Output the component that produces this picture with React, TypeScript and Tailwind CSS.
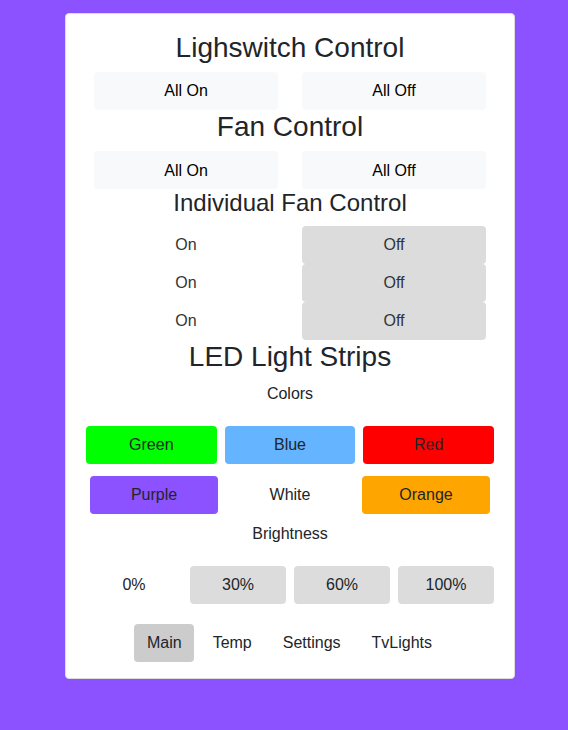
import React from "react";

const font = { fontFamily: '"Liberation Sans", Arial, sans-serif' };

function Btn({ children, className = "" }: { children: React.ReactNode; className?: string }) {
  return (
    <button
      className={`h-[38px] rounded-[4px] text-[16px] leading-[24px] flex items-center justify-center pt-[1px] ${className}`}
    >
      {children}
    </button>
  );
}

export default function App() {
  return (
    <div className="min-h-[730px] w-full bg-[#8c52ff] pt-[13px]" style={font}>
      <div className="ml-[65px] w-[450px] bg-white border border-[#dcdcdc] rounded-[4px] px-[20px] pt-[16px] pb-[16px] text-[#212529] flex flex-col items-stretch">
        <h2 className="text-[28px] leading-[1.2] text-center pt-[1px] mb-[7px]">Lighswitch Control</h2>
        <div className="grid grid-cols-2 gap-x-[24px] px-[8px]">
          <Btn className="bg-[#f8f9fa] text-black">All On</Btn>
          <Btn className="bg-[#f8f9fa] text-black">All Off</Btn>
        </div>
        <h2 className="text-[28px] leading-[1.2] text-center mb-[8px]">Fan Control</h2>
        <div className="grid grid-cols-2 gap-x-[24px] px-[8px]">
          <Btn className="bg-[#f8f9fa] text-black">All On</Btn>
          <Btn className="bg-[#f8f9fa] text-black">All Off</Btn>
        </div>
        <h3 className="text-[24px] leading-[1.2] text-center mb-[8px]">Individual Fan Control</h3>
        <div className="grid grid-cols-2 gap-x-[24px] px-[8px] text-[#333]">
          {[0, 1, 2].map((i) => (
            <React.Fragment key={i}>
              <Btn className="bg-transparent text-[#333]">On</Btn>
              <Btn className="bg-[#dcdcdc] text-[#333]">Off</Btn>
            </React.Fragment>
          ))}
        </div>
        <h2 className="text-[28px] leading-[1.2] text-center mb-[8px]">LED Light Strips</h2>
        <p className="text-[16px] leading-[24px] text-center mb-[20px]">Colors</p>
        <div className="grid grid-cols-3 gap-x-[8px]">
          <Btn className="bg-[#00ff00] text-[#212529]">Green</Btn>
          <Btn className="bg-[#64b4ff] text-[#212529]">Blue</Btn>
          <Btn className="bg-[#ff0000] text-[#212529]">Red</Btn>
        </div>
        <div className="grid grid-cols-3 mt-[12px]">
          <Btn className="bg-[#8c52ff] text-[#212529] mx-[4px]">Purple</Btn>
          <Btn className="bg-transparent text-[#212529] mx-[4px]">White</Btn>
          <Btn className="bg-[#ffa500] text-[#212529] mx-[4px]">Orange</Btn>
        </div>
        <p className="text-[16px] leading-[24px] text-center mt-[8px] mb-[20px]">Brightness</p>
        <div className="grid grid-cols-4 gap-x-[8px]">
          <Btn className="bg-transparent text-[#212529]">0%</Btn>
          <Btn className="bg-[#dcdcdc] text-[#212529]">30%</Btn>
          <Btn className="bg-[#dcdcdc] text-[#212529]">60%</Btn>
          <Btn className="bg-[#dcdcdc] text-[#212529]">100%</Btn>
        </div>
        <div className="flex justify-center gap-x-[6px] mt-[20px] pr-[1px]">
          <Btn className="bg-[#cccccc] px-[12.5px] text-[#212529]">Main</Btn>
          <Btn className="bg-transparent px-[12.5px] text-[#212529]">Temp</Btn>
          <Btn className="bg-transparent px-[12.5px] text-[#212529]">Settings</Btn>
          <Btn className="bg-transparent px-[12.5px] text-[#212529]">TvLights</Btn>
        </div>
      </div>
    </div>
  );
}
